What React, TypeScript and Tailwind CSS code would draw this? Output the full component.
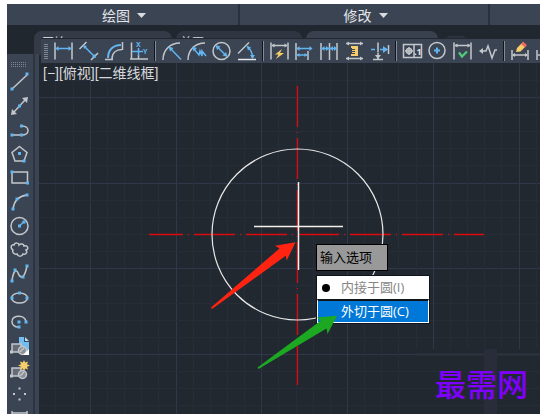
import type { ReactNode } from 'react';

const G = '#c3c7cc';
const B = '#62b5f0';
const O = '#f6cd6b';

type Tool = { name: string; art: ReactNode };

const dot = (x: number, y: number) => <rect x={x - 1.5} y={y - 1.5} width="3" height="3" fill={B} stroke="none" />;

const dimensionGroups: Tool[][] = [
  [
    {
      name: '线性',
      art: (
        <>
          <path d="M1 1.500v17M18 1.500v17" />
          <path d="M2 7.500h15" stroke={B} />
          <path d="M1.500 7.500l3-2.500v5zM17.500 7.500l-3-2.500v5z" fill={B} stroke="none" />
        </>
      ),
    },
    {
      name: '对齐',
      art: (
        <>
          <path d="M.5 8l7-7M12 19l7-7" />
          <path d="M5 5l11 11" stroke={B} />
          <path d="M4 4l4 1-3 3zM17 17l-4-1 3-3z" fill={B} stroke="none" />
        </>
      ),
    },
    {
      name: '弧长',
      art: (
        <>
          <path d="M1 18.500h8M18.500 1v8M8 18c0-6 4-9.500 10-9.500" />
          <path d="M4 17C4 9 9 4 17 4" stroke={B} strokeWidth="2" />
        </>
      ),
    },
    {
      name: '坐标',
      art: (
        <>
          <path d="M2.500 1.500v17M1 18h18M9.500 14v4" />
          <path d="M3 10.500h11M9.500 7v8" stroke={B} />
          <text x="7" y="6" fontSize="7" fontWeight="700" fill={B} stroke="none">X</text>
          <text x="14" y="13" fontSize="7" fontWeight="700" fill={B} stroke="none">Y</text>
        </>
      ),
    },
  ],
  [
    {
      name: '半径',
      art: (
        <>
          <path d="M1 19C1 9 8 2 18 2" />
          <path d="M8 7l11 11.500" stroke={B} />
          <path d="M6.500 5.500l5 1.500-3.500 3.500z" fill={B} stroke="none" />
        </>
      ),
    },
    {
      name: '折弯',
      art: (
        <>
          <path d="M1 19C1 9 8 2 18 2" />
          <path d="M7 8l5 6 1-4 2 5 0-5 4 5" stroke={B} />
          <path d="M5 5.500l5 1.500-3.500 3.500z" fill={B} stroke="none" />
        </>
      ),
    },
    {
      name: '直径',
      art: (
        <>
          <circle cx="9.500" cy="10" r="8.500" />
          <path d="M5 5.500l9 9" stroke={B} />
          <path d="M3.500 4l5 1.500L5 9zM15.500 16l-5-1.500L14 11z" fill={B} stroke="none" />
        </>
      ),
    },
    {
      name: '角度',
      art: (
        <>
          <path d="M1 18.500h18" stroke="#e5e7ea" />
          <path d="M1 12.500l11-11" />
          <path d="M11 6c3 3 4.500 6 4.500 11" stroke={B} />
          <path d="M9.500 4.500l4.500 2-3 3zM15.500 18l-2.500-4h5z" fill={B} stroke="none" />
        </>
      ),
    },
  ],
  [
    {
      name: '快速标注',
      art: (
        <>
          <path d="M1 1.500v17M18 1.500v17M2 4.500h15" />
          <path d="M1.500 4.500l3-2v4zM17.500 4.500l-3-2v4z" fill={G} stroke="none" />
          <path d="M12 8l-7 5.500h3.500L6 18l8-6h-4z" fill={O} stroke="none" />
        </>
      ),
    },
    {
      name: '基线',
      art: (
        <>
          <path d="M1 2v17M13 10v9" />
          <path d="M2 7.500h14M2 14h10" stroke={B} />
          <path d="M17.500 7.500l-3-2.500v5zM12.500 14l-3-2v4zM1.500 7.500l3-2.500v5zM1.500 14l3-2v4z" fill={B} stroke="none" />
        </>
      ),
    },
    {
      name: '连续',
      art: (
        <>
          <path d="M1 2v17M9.500 2v17M17 2v17" />
          <path d="M1 7.500h16" stroke={B} />
          <path d="M1.500 7.500l3-2.500v5zM9 7.500L6 5v5zM10 7.500L13 5v5zM17 7.500L14 5v5z" fill={B} stroke="none" />
        </>
      ),
    },
    {
      name: '等距标注',
      art: (
        <>
          <path d="M1 2.500h17M1 17.500h17" />
          <path d="M1 2.500l3-2v4zM18 2.500l-3-2v4zM1 17.500l3-2v4zM18 17.500l-3-2v4z" fill={G} stroke="none" />
          <path d="M6 5h7v10H6v-2h1V7H6z" fill={O} stroke="none" />
          <path d="M7 8.500h3M7 10.500h3M7 12.500h3" stroke="#3b4453" strokeWidth="1" />
        </>
      ),
    },
    {
      name: '折断标注',
      art: (
        <>
          <path d="M8 1.500v10M8 12v6M18.500 4v9M3 18.500h10" />
          <path d="M8 18l-3-4h6z" fill={G} stroke="none" />
          <path d="M1 8.500h4M10 8.500h7" stroke={B} />
          <path d="M18 8.500l-5-3.500v7z" fill={B} stroke="none" />
        </>
      ),
    },
  ],
  [
    {
      name: '公差',
      art: (
        <>
          <path d="M.5 3.500h18v13H.5zM11 3.500v13" />
          <circle cx="6" cy="10" r="2.500" />
          <path d="M6 6v8M2 10h8" />
          <text x="11" y="14" fontSize="9" fontWeight="700" fill="#e5e7ea" stroke="none">.1</text>
        </>
      ),
    },
    {
      name: '圆心标记',
      art: (
        <>
          <circle cx="9" cy="9.500" r="8" />
          <path d="M9 6.500v6M6 9.500h6" stroke={B} strokeWidth="2" />
        </>
      ),
    },
    {
      name: '检验',
      art: (
        <>
          <path d="M1 1.500v17M18 1.500v17M2 4.500h15" />
          <path d="M1.500 4.500l3-2v4zM17.500 4.500l-3-2v4z" fill={G} stroke="none" />
          <path d="M6 11.500l3 4 5-5" stroke="#53c97b" strokeWidth="2.200" />
        </>
      ),
    },
    {
      name: '折弯线性',
      art: (
        <>
          <path d="M3 10h5l2-5 4 12 3-8h2" />
          <path d="M1 10l4-3v6z" fill={G} stroke="none" />
        </>
      ),
    },
  ],
  [
    {
      name: '编辑标注',
      art: (
        <>
          <path d="M1 9v10M17 9v10M2 14h14" />
          <path d="M1 14l3-2v4zM17 14l-3-2v4z" fill={G} stroke="none" />
          <path d="M5 11l1-4 5-5 3.500 3.500-5 5z" fill={O} stroke="none" />
          <path d="M10 3l2-2.500 4 3.500-2 2.500z" fill="#ee6a5f" stroke="none" />
        </>
      ),
    },
    {
      name: '标注文字',
      art: <path d="M1 9v10M2 14h14" />,
    },
  ],
];

const block = (
  <>
    <path d="M2 8h9v8H2z" fill="#666d78" />
    <circle cx="12.500" cy="14.500" r="4" fill="#8b9097" />
    <path d="M10 16l4-4" />
    <rect x="0" y="14.500" width="3" height="3" fill={G} stroke="none" />
  </>
);

const drawTools: Tool[] = [
  { name: '直线', art: <><path d="M2 17L17 3" />{dot(2, 17)}{dot(17, 2)}</> },
  {
    name: '构造线',
    art: (
      <>
        <path d="M4 16L15 4" />
        <path d="M18 1l-1 6-5-5zM1 19l1-6 5 5z" fill={G} stroke="none" />
        {dot(9.5, 10)}
      </>
    ),
  },
  { name: '多段线', art: <><path d="M2 15h10M12 6c8 0 8 9 0 9" />{dot(2, 15)}{dot(11.5, 15)}{dot(11.5, 6)}</> },
  { name: '多边形', art: <><path d="M9.500 2.500l7.500 6-3 8.500H5L2 8.500z" />{dot(9.5, 9.5)}{dot(14, 17)}</> },
  { name: '矩形', art: <><path d="M2 4h15.500v11H2z" />{dot(2, 4)}{dot(17.5, 15)}</> },
  { name: '圆弧', art: <><path d="M3 17C4 9 9 4 17 3" />{dot(3, 17)}{dot(7, 7)}{dot(17, 3)}</> },
  { name: '圆', art: <><circle cx="9.500" cy="10" r="8.500" /><path d="M9.500 10l4-4" stroke={B} />{dot(9.5, 10)}{dot(14, 6)}</> },
  {
    name: '修订云线',
    art: <path d="M3 10C0 8 1 4 4 5c1-3 5-2 5 0 2-2 5-1 5 1 4-1 5 3 2 4 2 3-1 5-3 4-1 3-5 3-6 0-3 1-5-2-4-4z" />,
  },
  { name: '样条曲线', art: <><path d="M2 17C3 8 6 4 8 9s6 8 9-7" />{dot(2, 17)}{dot(5, 6)}{dot(13, 13)}{dot(17, 2)}</> },
  { name: '椭圆', art: <><ellipse cx="9.500" cy="10" rx="8" ry="5" />{dot(9.5, 5)}{dot(2, 10)}{dot(17, 10)}</> },
  { name: '椭圆弧', art: <><path d="M16 9C14 2 1 3 2 10c0 3 3 5 6 5" />{dot(9, 10)}{dot(16, 10)}{dot(9, 15)}</> },
  {
    name: '插入块',
    art: (
      <>
        <path d="M9 1h5v5h5v12H9z" fill="#73bdf0" stroke="none" />
        <path d="M15 1l4 4h-4z" fill="#b5dcf7" stroke="none" />
        {block}
        <path d="M13 19l6-6v6z" fill="#fff" stroke="none" />
      </>
    ),
  },
  {
    name: '创建块',
    art: (
      <>
        {block}
        <path
          d="M14 0l1.200 2.500L18 1.500l-1 2.700 3 1.300-3 1.300 1 2.700-2.800-1L14 11l-1.200-2.500-2.800 1 1-2.700-3-1.300 3-1.300-1-2.700 2.800 1z"
          fill={O}
          stroke="none"
        />
      </>
    ),
  },
  { name: '点', art: <path d="M8.500 4.500h2M8.500 15.500h2M3 10h2M14 10h2" strokeWidth="2" /> },
  { name: '图案填充', art: <path d="M2 3v12M17 3v12M2 5h15" /> },
];

function ToolButton({ tool, className }: { tool: Tool; className: string }) {
  return (
    <button type="button" aria-label={tool.name} className={`flex shrink-0 items-center justify-center ${className}`}>
      <svg width="20" height="20" viewBox="0 0 20 20" fill="none" stroke={G} strokeWidth="1.500" overflow="visible">
        {tool.art}
      </svg>
    </button>
  );
}

function RibbonPanel({ title, className }: { title: string; className: string }) {
  return (
    <button
      type="button"
      className={`flex items-center justify-center gap-[7px] border-r-2 border-[#2a313c] pt-0.5 pl-[3px] ${className}`}
    >
      {title}
      <svg width="9" height="5" viewBox="0 0 9 5" fill="#d8dbe0">
        <path d="M0 0h9L4.500 5z" />
      </svg>
    </button>
  );
}

// minor line every 1/5 of a major cell
const CELL = 17.15;
const lines = Array.from({ length: 120 }, (_, i) => i);

function Drawing() {
  return (
    <svg className="block h-full w-full">
      <g transform="translate(-39 -63)" fill="none">
        {lines.map((i) => {
          const x = Math.round(4 + i * CELL) + 0.5;
          const y = Math.round(11 + i * CELL) + 0.5;
          return (
            <path key={i} d={`M${x} 0V2000M0 ${y}H2600`} stroke={i % 5 ? '#272d38' : '#30374a'} />
          );
        })}
        <rect x="416" y="349" width="125" height="80" fill="#222830" />
        <path d="M416 354.500h125" stroke="#2e3541" strokeWidth="2" />
        <path d="M416 371.500h125M416 388.500h125M416 405.500h125" stroke="#272d38" />
        <rect x="484" y="349" width="13" height="80" fill="#282d39" />
        <g stroke="#dc0a0f" strokeWidth="1.300" strokeDasharray="41 5 1 5">
          <path d="M149 234.500h335" strokeDashoffset="7" />
          <path d="M297.500 86v299" />
        </g>
        <circle cx="297.500" cy="234.500" r="85.500" stroke="#e8e8e8" strokeWidth="1.200" />
        <path d="M254 226.500h89M298.500 182v88" stroke="#f4f0ec" strokeWidth="1.500" />
      </g>
    </svg>
  );
}

function OptionMenu() {
  return (
    <div className="absolute top-[181px] left-[277px] w-[114px] text-[13px]">
      <div className="flex h-[27px] w-[72px] items-center border border-black bg-[#999999] px-[3px] text-black">
        输入选项
      </div>
      <div role="menu" aria-label="输入选项" className="mt-1 border border-[#10151c] bg-white">
        <button
          type="button"
          role="menuitemradio"
          aria-checked="true"
          className="flex h-[23px] w-full items-center gap-[11px] pl-[5px] text-[#858585]"
        >
          <span className="size-2 rounded-full bg-black" />
          内接于圆(I)
        </button>
        <button
          type="button"
          role="menuitemradio"
          aria-checked="false"
          className="flex h-6 w-full items-center border border-t-2 border-white border-t-[#10151c] bg-[#0078d7] pl-[23px] text-white"
        >
          外切于圆(C)
        </button>
      </div>
    </div>
  );
}

export default function App() {
  return (
    <main className="h-screen bg-white pt-1 pr-2 pb-0.5 pl-[7px] font-['Open_Sans','Noto_Sans_CJK_SC',sans-serif]">
      <div className="flex h-full flex-col overflow-hidden bg-[#222830]">
        <header className="flex h-[21px] shrink-0 bg-[#3b4453] text-[14px] leading-5 text-[#e3e5e8]">
          <RibbonPanel title="绘图" className="w-[233px]" />
          <RibbonPanel title="修改" className="w-[250px]" />
        </header>

        <nav className="flex h-[29px] shrink-0 bg-[#21272f] pt-[6px] pl-[27px] text-[12px] leading-[22px] text-[#d0d3d8]">
          <button type="button" className="h-6 w-[138px] rounded-t-lg bg-[#343b47] pl-2 text-left">
            开始
          </button>
          <button type="button" className="ml-1 h-6 w-[126px] rounded-t-lg bg-[#303641] pl-1 text-left">
            首页
          </button>
          <button type="button" aria-label="图形" className="ml-1 h-6 w-[132px] rounded-t-lg bg-[#39414e]" />
          <button type="button" aria-label="新图形" className="mt-[5px] ml-2 h-4 w-5 rounded-t bg-[#2c333d]" />
        </nav>

        <div className="flex min-h-0 flex-1">
          <aside className="flex w-8 shrink-0 flex-col overflow-hidden border-r-4 border-[#3b4453] bg-[#3b4453]">
            <div className="flex min-h-0 flex-1 flex-col border-r-2 border-[#2d3441] pt-2">
              <svg width="15" height="8" className="ml-1 shrink-0" stroke="#818791" strokeDasharray="1 1">
                <path d="M0 .5h15M0 2.500h15M0 4.500h15" />
              </svg>
              {drawTools.map((tool) => (
                <ToolButton key={tool.name} tool={tool} className="h-6 w-[26px]" />
              ))}
            </div>
          </aside>

          <div className="-mt-4 flex min-w-0 flex-1 flex-col">
            <div className="ml-0.5 flex h-[25px] shrink-0 items-center overflow-hidden border-t border-[#222830] bg-[#3b4453]">
              <svg width="4" height="15" className="mr-[3px] ml-[3px] shrink-0" stroke="#818791" strokeWidth="4" strokeDasharray="1 1">
                <path d="M2 0v15" />
              </svg>
              {dimensionGroups.map((group, i) => (
                <div key={group[0].name} className="flex shrink-0 items-center">
                  {i > 0 && (
                    <span className="flex w-2 justify-center">
                      <span className="h-5 w-0.5 border-r border-[#858b94] bg-[#11151b]" />
                    </span>
                  )}
                  {group.map((tool) => (
                    <ToolButton key={tool.name} tool={tool} className="h-6 w-[25px]" />
                  ))}
                </div>
              ))}
            </div>

            <section className="relative min-h-0 flex-1 overflow-hidden">
              <Drawing />
              <div className="absolute top-0 left-1 font-['Liberation_Sans','Noto_Sans_CJK_SC',sans-serif] text-[14px] leading-5 whitespace-nowrap text-[#d5d8dc]">
                [−][俯视][二维线框]
              </div>
              <OptionMenu />
              <svg className="pointer-events-none absolute inset-0 h-full w-full">
                <g transform="translate(-39 -63)">
                  <path d="M211 307.500L279.500 248.500 275 245.700 295.500 242.300 286.700 260.500 285.700 255.700 212 309z" fill="#ff2412" />
                  <path d="M257.500 367.500L321 320.500 317 317.500 337 315.700 327.500 334 326.500 328.500 258.500 369z" fill="#1ca821" />
                </g>
              </svg>
              <div className="absolute right-3 bottom-2 font-['Noto_Sans_CJK_SC',sans-serif] text-[31px] leading-[46px] font-medium text-[#8000ff]">
                最需网
              </div>
            </section>
          </div>
        </div>
      </div>
    </main>
  );
}
